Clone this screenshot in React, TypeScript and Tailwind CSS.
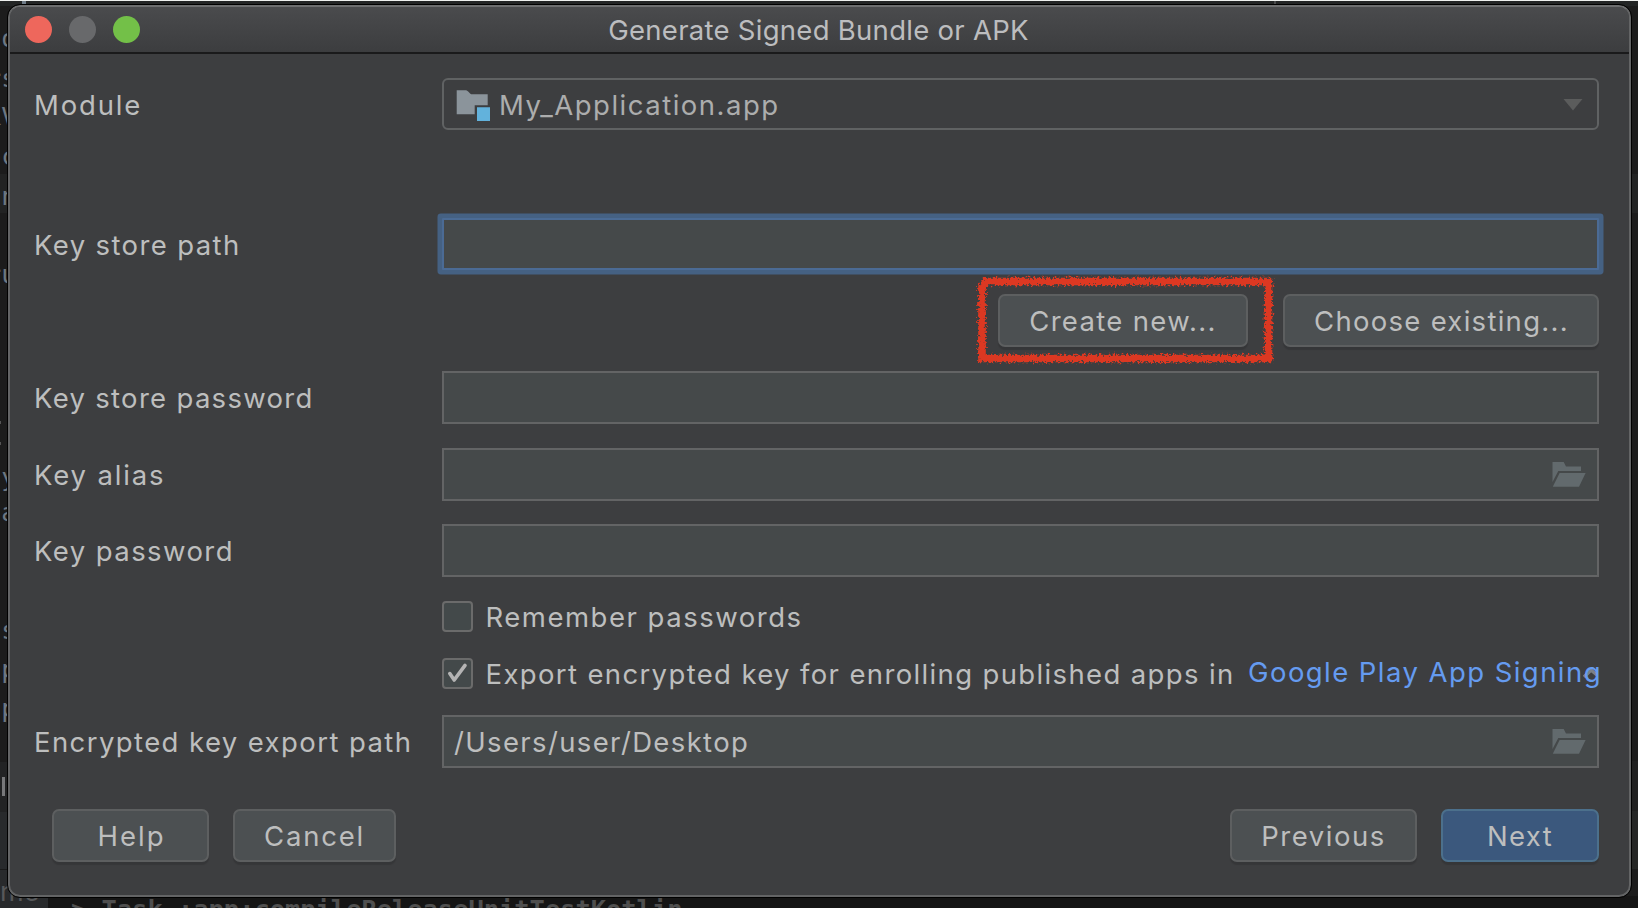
import type { ReactNode } from "react";

function Label({ children, className = "pt-[1px]" }: { children: ReactNode; className?: string }) {
  return <span className={`block w-[408px] shrink-0 whitespace-nowrap ${className}`}>{children}</span>;
}

function OpenFolder() {
  return (
    <svg width="34" height="26" viewBox="0 0 34 26" className="mt-[1px] mr-[11px] block shrink-0" fill="#626a6d">
      <path d="M.5 0H11.7L14 4.6H29V9H6.3L.5 20Z" />
      <path d="M7.6 11H33.6L27 24.7H.8Z" />
    </svg>
  );
}

function Field({ children }: { children?: ReactNode }) {
  return (
    <div className="flex h-[53px] grow items-center justify-between border-2 border-[#636465] bg-[#45494a]">
      {children}
    </div>
  );
}

function Button({ children, className }: { children: ReactNode; className: string }) {
  return (
    <button
      className={`flex h-[53px] shrink-0 items-center justify-center rounded-[7px] border-2 pt-[1px] whitespace-nowrap shadow-[0_3px_1px_rgba(0,0,0,0.12)] ${className}`}
    >
      {children}
    </button>
  );
}

function Checkbox({ checked }: { checked?: boolean }) {
  return (
    <span className="mr-[12.5px] flex size-[31px] shrink-0 rounded-[4px] border-2 border-[#6b6b6b] bg-[#43494a]">
      {checked && (
        <svg width="27" height="27" viewBox="2 2 27 27" fill="none" stroke="#b4b4b4" strokeWidth="3.6" strokeLinecap="round">
          <path d="M7.8 15.6L12.2 22L23 7.4" strokeLinejoin="round" />
        </svg>
      )}
    </span>
  );
}

const fragments = [
  { t: "to", b: "top-[23px]" },
  { t: "rs", b: "top-[63px]" },
  { t: "kV", b: "top-[101px]" },
  { t: "oc", b: "top-[141px]" },
  { t: "an", b: "top-[181px]" },
  { t: "ru", b: "top-[259px]" },
  { t: "fy", b: "top-[462px]" },
  { t: "ua", b: "top-[497px]" },
  { t: "as", b: "top-[615px]" },
  { t: "ap", b: "top-[654px]" },
  { t: "ap", b: "top-[693px]" },
];

function EditorBehind() {
  return (
    <div className="absolute inset-0 overflow-hidden bg-[#1c1c1c] font-['DejaVu_Sans_Mono',monospace] text-[25.4px] leading-[30px] tracking-normal">
      <div className="absolute inset-x-0 top-[174px] h-[39px] bg-[#222323]" />
      <div className="absolute inset-x-0 top-0 h-[6px] bg-[#232525]" />
      <div className="absolute inset-x-0 top-0 h-px bg-[#eef0ee]" />
      <div className="absolute left-[22px] top-px h-[4px] w-[4px] bg-[#6f7c88]" />
      <div className="absolute left-[1274px] top-px h-[3px] w-[2px] bg-[#4a4b4c]" />
      <div className="absolute left-0 top-[762px] h-[50px] w-[48px] bg-[#222324]" />
      <div className="absolute left-0 top-[812px] h-[96px] w-[48px] bg-[#282a2c]" />
      <div className="absolute left-0 top-[869px] h-px w-[48px] bg-[#1a1a1a]" />
      <div className="absolute right-0 top-[761px] h-[50px] w-[8px] bg-[#202020]" />
      <div className="absolute right-0 top-[811px] h-[58px] w-[8px] bg-[#252625]" />
      <div className="absolute bottom-0 left-[48px] h-[12px] w-[1590px] bg-[#151515]" />
      {fragments.map((f) => (
        <span key={f.b} className={`absolute left-[-14px] text-[#6d7782] ${f.b}`}>
          {f.t}
        </span>
      ))}
      <div className="absolute left-0 top-[421px] h-[3px] w-px bg-[#555]" />
      <div className="absolute left-0 top-[442px] h-[3px] w-px bg-[#555]" />
      <div className="absolute left-[2px] top-[777px] h-[19px] w-[2.5px] bg-[#77787a]" />
      <span className="absolute left-[-12px] top-[877px] font-['Inter',sans-serif] text-[27px] tracking-[1.4px] text-[#56585a]">rms</span>
      <span className="absolute left-[71px] top-[894px] whitespace-pre font-bold text-[#4f4f4f]">
        {"> Task :app:compileReleaseUnitTestKotlin"}
      </span>
    </div>
  );
}

const plain = "border-[#5d5f60] bg-[#4c5052]";

export default function App() {
  return (
    <div className="relative h-[908px] w-[1638px] overflow-hidden pt-[5px] pl-[8px] font-['Inter',sans-serif] text-[27.5px] leading-[34px] tracking-[1.4px] text-[#bdbebe]">
      <EditorBehind />
      <div className="relative flex h-[892px] w-[1623px] flex-col overflow-hidden rounded-[12px] border-2 border-[#636465] border-t-[#6d6e6f] bg-[#3d3e40] outline outline-1 outline-black">
        <header className="relative flex h-[47px] shrink-0 items-center justify-center border-b-2 border-[#1a1a1b] bg-linear-to-b from-[#4a4b4d] to-[#3c3d3f]">
          <div className="absolute left-[15px] top-[9px] flex gap-[17px]">
            <i className="size-[27px] rounded-full bg-[#ee675c]" />
            <i className="size-[27px] rounded-full bg-[#68696b]" />
            <i className="size-[27px] rounded-full bg-[#73c048]" />
          </div>
          <h1 className="pt-[1px] pr-[2px] tracking-[0.28px] text-[#bcbdbf]">Generate Signed Bundle or APK</h1>
        </header>

        <main className="flex flex-col pr-[30px] pl-[24px]">
          <div className="mt-[24px] flex h-[52px] items-center">
            <Label className="pt-[2px] tracking-[1.85px]">Module</Label>
            <div className="flex h-full grow items-center rounded-[6px] border-2 border-[#606263] pl-[12px]">
              <svg width="36" height="34" viewBox="0 0 36 34" className="mt-[4px] shrink-0">
                <path d="M.7 1.2H10C12 1.2 13.8 5.3 16 5.3H31.7V16.3H18.7V25.3H.7Z" fill="#8b949b" />
                <path d="M21 18.3H34V32H21Z" fill="#62b2dc" />
              </svg>
              <span className="grow pt-[2px] pl-[7px] tracking-[1.5px] text-[#acadad]">My_Application.app</span>
              <svg width="20" height="12" viewBox="0 0 20 12" className="mt-[2px] mr-[14px]">
                <path d="M.5 0H19.5L10 11.5Z" fill="#5b5c5c" />
              </svg>
            </div>
          </div>

          <div className="mt-[88px] flex h-[52px] items-center">
            <Label className="pt-[2px] tracking-[1.38px]">Key store path</Label>
            <div className="h-full grow rounded-[1px] border-2 border-[#4b6b95] bg-[#45494a] shadow-[0_0_0_4.5px_#456183]" />
          </div>

          <div className="mt-[24px] flex justify-end gap-[35px]">
            <div className="relative">
              <Button className={`w-[250px] tracking-[1.33px] ${plain}`}>Create new...</Button>
              <svg width="310" height="100" viewBox="970 268 310 100" className="absolute -left-[28px] -top-[26px]">
                <defs>
                  <filter id="chalk" x="-5%" y="-10%" width="110%" height="120%">
                    <feTurbulence type="fractalNoise" baseFrequency="0.45" numOctaves="2" seed="7" result="n" />
                    <feDisplacementMap in="SourceGraphic" in2="n" scale="8" xChannelSelector="R" yChannelSelector="G" />
                  </filter>
                </defs>
                <path d="M982 358.5V287L986 281.5H1268.5V358.5Z" fill="none" stroke="#dc3823" strokeWidth="7.6" filter="url(#chalk)" />
              </svg>
            </div>
            <Button className={`w-[316px] pl-[1px] tracking-[1.28px] ${plain}`}>Choose existing...</Button>
          </div>

          <div className="mt-[24px] flex items-center">
            <Label className="pt-[1px] tracking-[1.3px]">Key store password</Label>
            <Field />
          </div>
          <div className="mt-[24px] flex items-center">
            <Label className="pt-[1px] tracking-[1.85px]">Key alias</Label>
            <Field>
              <span />
              <OpenFolder />
            </Field>
          </div>
          <div className="mt-[23px] flex items-center">
            <Label className="pt-[1px] tracking-[1.42px]">Key password</Label>
            <Field />
          </div>

          <div className="mt-[24px] flex h-[31px] items-center pl-[408px]">
            <Checkbox />
            <span className="pt-[1px] tracking-[1.51px]">Remember passwords</span>
          </div>
          <div className="mt-[26px] flex h-[31px] items-center pl-[408px]">
            <Checkbox checked />
            <span className="w-[762.5px] shrink-0 whitespace-nowrap pt-[1px] tracking-[1.36px]">
              Export encrypted key for enrolling published apps in
            </span>
            <a className="relative -mr-[20px] whitespace-nowrap pb-[3px] tracking-[1.44px] text-[#659bf0]">
              <svg width="16" height="14" viewBox="0 0 16 14" className="absolute left-[335px] top-[11px]" fill="none" stroke="#7c8187" strokeWidth="3.5">
                <path d="M1 11L8 4L14 9" />
              </svg>
              <span className="relative">Google Play App Signing</span>
            </a>
          </div>

          <div className="mt-[26px] flex items-center">
            <Label className="pt-[1px] tracking-[1.41px]">Encrypted key export path</Label>
            <Field>
              <span className="pt-[1px] pl-[10px] tracking-[1.36px]">/Users/user/Desktop</span>
              <OpenFolder />
            </Field>
          </div>

          <footer className="mt-[41px] flex gap-[24px] pl-[18px]">
            <Button className={`w-[157px] pl-[2px] tracking-[2.05px] ${plain}`}>Help</Button>
            <Button className={`mr-auto w-[163px] tracking-[1.78px] ${plain}`}>Cancel</Button>
            <Button className={`w-[187px] tracking-[1.51px] ${plain}`}>Previous</Button>
            <Button className="w-[158px] border-[#4c708c] bg-[#3b587d] tracking-[1.3px]">Next</Button>
          </footer>
        </main>
      </div>
    </div>
  );
}
